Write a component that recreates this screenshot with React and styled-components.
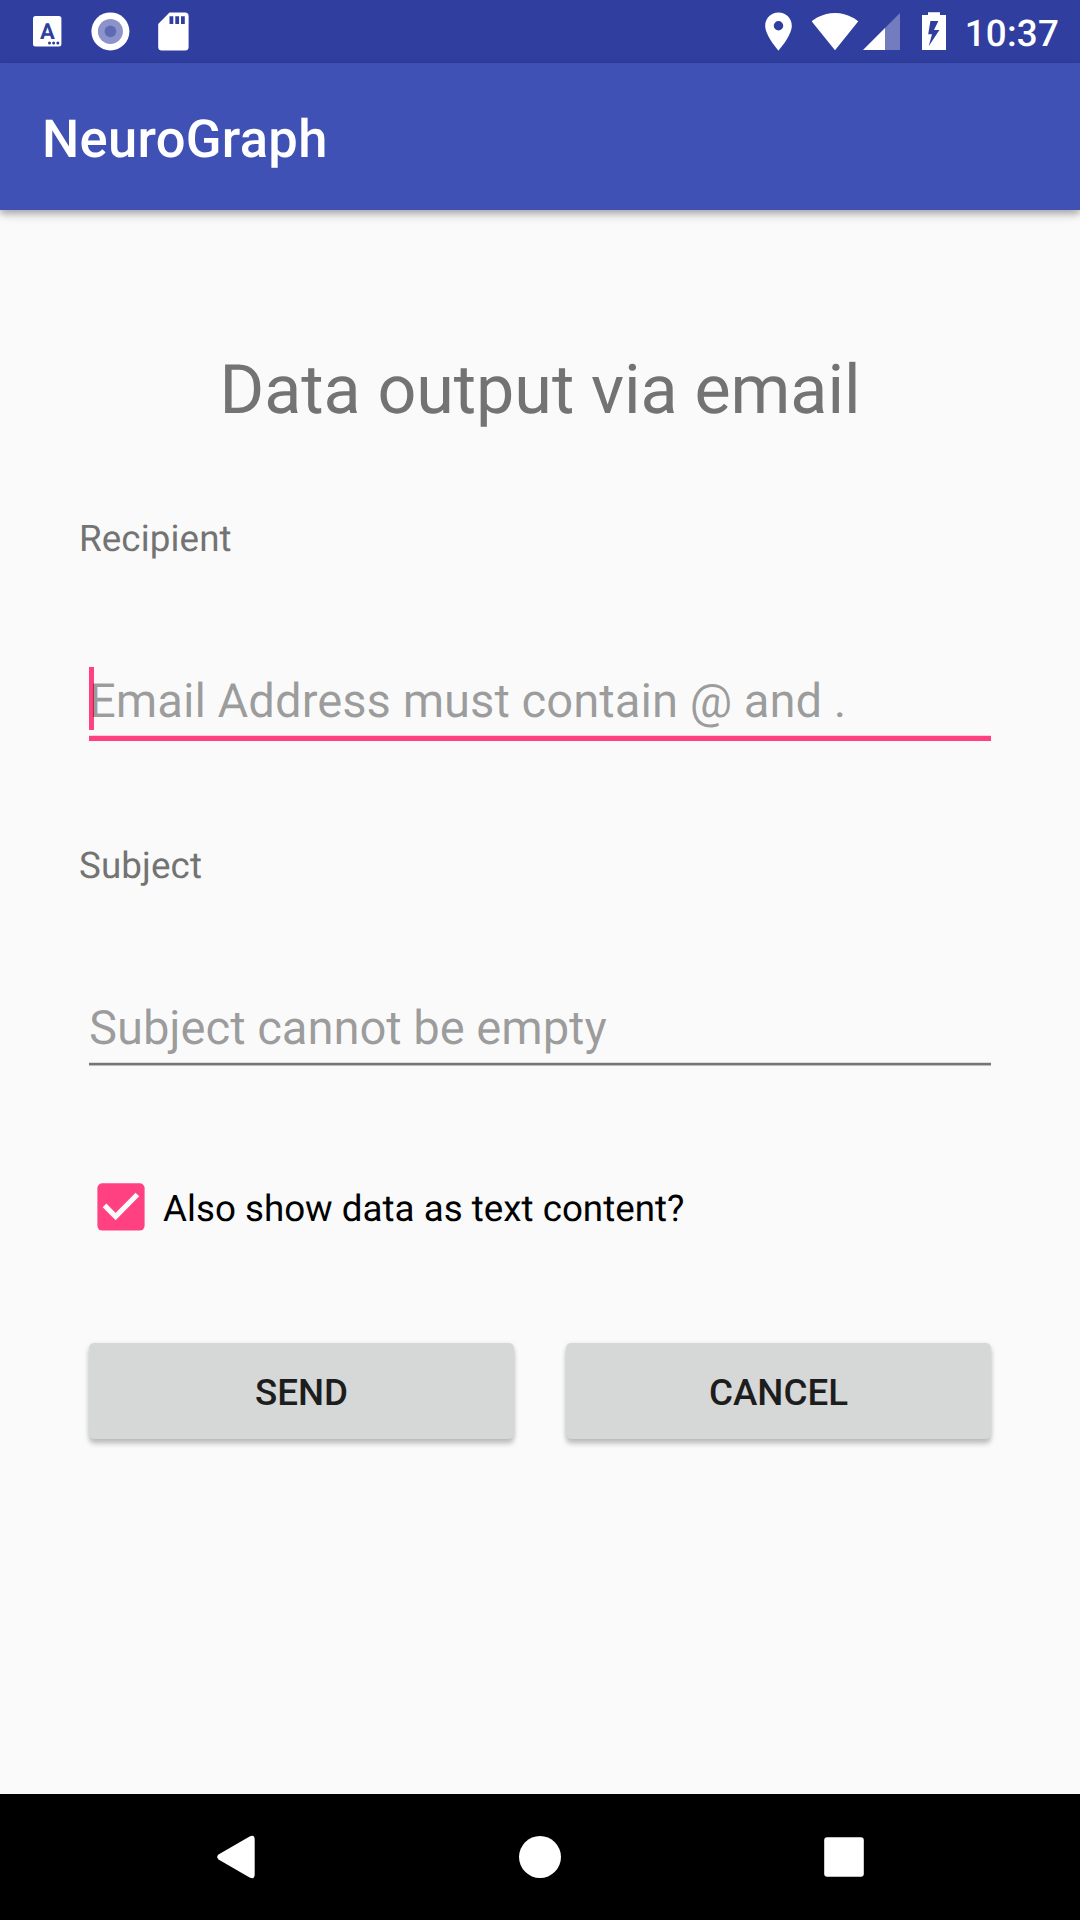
import React from 'react';
import styled, { createGlobalStyle } from 'styled-components';

const Global = createGlobalStyle`
  * { box-sizing: border-box; }
  body { margin: 0; background: #fafafa; }
  svg { display: block; flex: none; }
`;

const Screen = styled.div`
  display: flex;
  flex-direction: column;
  width: 1080px;
  height: 1920px;
  overflow: hidden;
  background: #fafafa;
  font-family: Roboto, "Liberation Sans", sans-serif;
  text-rendering: geometricPrecision;
`;

const StatusBar = styled.header`
  display: flex;
  align-items: center;
  justify-content: space-between;
  height: 63px;
  padding: 0 21px 0 32px;
  background: #303f9f;
`;

const IconStrip = styled.div`
  display: flex;
  align-items: center;
`;

const Clock = styled.span`
  margin-left: 19px;
  color: #fff;
  font-size: 36.75px;
  font-weight: 500;
  letter-spacing: 0.2px;
  line-height: 63px;
  padding-top: 3px;
`;

const AppBar = styled.div`
  display: flex;
  align-items: center;
  flex: none;
  height: 147px;
  padding: 0 42px;
  background: #3f51b5;
  box-shadow: 0 4px 10px rgba(0, 0, 0, 0.22), 0 4px 5px rgba(0, 0, 0, 0.14);
`;

const AppTitle = styled.h1`
  margin: 0;
  padding-top: 5px;
  color: #fff;
  font-size: 52.5px;
  font-weight: 500;
  letter-spacing: 0.3px;
  line-height: 62px;
`;

const Content = styled.main`
  flex: 1;
  padding: 140px 79px 0;
`;

const Heading = styled.h2`
  margin: 0 0 87px;
  color: #737373;
  font-size: 68.25px;
  font-weight: 400;
  letter-spacing: -0.07px;
  line-height: 80px;
  text-align: center;
`;

const Field = styled.label`
  display: block;
  height: 327px;
`;

const FieldLabel = styled.span`
  display: block;
  color: #737373;
  font-size: 36.75px;
  letter-spacing: 0.12px;
  line-height: 44px;
`;

const InputBox = styled.span`
  display: flex;
  align-items: flex-start;
  height: ${(p) => (p.$focused ? 74 : 65)}px;
  margin: ${(p) => (p.$focused ? 106 : 112)}px 10px 0;
  border-bottom: ${(p) => (p.$focused ? '5px solid #ff4081' : '2px solid #757575')};
  box-shadow: ${(p) => (p.$focused ? 'inset 0 -1px #fcd0de' : 'inset 0 -1px #dcdcdc, 0 1px #bcbcbc')};
`;

const Caret = styled.span`
  width: 5px;
  height: 63px;
  margin-right: -5px;
  background: #ff4081;
`;

const Hint = styled.span`
  color: rgba(0, 0, 0, 0.38);
  font-size: 47.25px;
  letter-spacing: ${(p) => (p.$focused ? -0.02 : -0.09)}px;
  line-height: 56px;
  padding-top: ${(p) => (p.$focused ? 6 : 0)}px;
  white-space: nowrap;
`;

const CheckRow = styled.label`
  display: flex;
  align-items: center;
  gap: 18px;
  height: 48px;
  padding-left: 18px;
  margin-top: 12px;
  color: #000;
  font-size: 36.75px;
  line-height: 44px;
`;

const CheckText = styled.span`
  padding-top: 3px;
`;

const Actions = styled.div`
  display: flex;
  gap: 52px;
  margin: 112px 10px 0;
`;

const Button = styled.button`
  flex: 1;
  height: 96px;
  padding: 3px 0 0;
  border: 0;
  border-radius: 5px;
  background: #d6d7d7;
  box-shadow: 0 5px 5px rgba(0, 0, 0, 0.2), 0 1px 5px rgba(0, 0, 0, 0.1);
  color: #1d1d1d;
  font-family: inherit;
  font-size: 36.75px;
  font-weight: 500;
  line-height: 44px;
`;

const NavBar = styled.nav`
  display: flex;
  align-items: center;
  justify-content: space-between;
  flex: none;
  height: 126px;
  padding: 0 215px;
  background: #000;
`;

const KeyboardIcon = () => (
  <svg width="30" height="63" viewBox="32 0 30 63">
    <rect x="33" y="16" width="28.4" height="30.6" rx="2.5" fill="#fff" />
    <text x="47.3" y="38.6" textAnchor="middle" fontFamily="Roboto" fontWeight="700" fontSize="22" fill="#303f9f">A</text>
    <g fill="#303f9f">
      <circle cx="49.5" cy="43" r="1.5" />
      <circle cx="53.6" cy="43" r="1.5" />
      <circle cx="57.8" cy="43" r="1.5" />
    </g>
  </svg>
);

const RecordIcon = () => (
  <svg width="96" height="63" viewBox="62 0 96 63">
    <circle cx="110.4" cy="31.4" r="19" fill="#fff" />
    <circle cx="110.4" cy="31.4" r="12.5" fill="#8b93ca" />
    <circle cx="110.4" cy="31.4" r="5.8" fill="#5f6ab4" />
  </svg>
);

const SdIcon = () => (
  <svg width="32" height="63" viewBox="158 0 32 63">
    <path d="M169.5 12.5H185a3.6 3.6 0 0 1 3.6 3.6V47a3.6 3.6 0 0 1-3.6 3.6H161.8a3.6 3.6 0 0 1-3.6-3.6V24Z" fill="#fff" />
    <path d="M169.5 16.3h3.8v7.7h-3.8zM175.3 16.3h3.8v7.7h-3.8zM181 16.3h3.8v7.7H181z" fill="#303f9f" />
  </svg>
);

const PinIcon = () => (
  <svg width="47" height="63" viewBox="765 0 47 63">
    <path fillRule="evenodd" d="M778.5 12.4c-7.4 0-13.3 5.9-13.3 13.3 0 10 13.3 24.8 13.3 24.8s13.3-14.8 13.3-24.8c0-7.4-5.9-13.3-13.3-13.3Zm0 18.1a4.75 4.75 0 1 1 0-9.5 4.75 4.75 0 0 1 0 9.5Z" fill="#fff" />
  </svg>
);

const WifiIcon = () => (
  <svg width="50" height="63" viewBox="812 0 50 63">
    <path d="M835 50.2 858.3 21.3C857.4 20.6 848.5 13 835 13s-22.4 7.6-23.3 8.3Z" fill="#fff" />
  </svg>
);

const SignalIcon = () => (
  <svg width="60" height="63" viewBox="862 0 60 63">
    <path d="M885 50H900V13L885 28Z" fill="#fff" fillOpacity="0.32" />
    <path d="M863 50H885V28Z" fill="#fff" />
  </svg>
);

const BatteryIcon = () => (
  <svg width="24" height="63" viewBox="922 0 24 63">
    <path fillRule="evenodd" d="M928 12.2h12v2.9h6V50h-24V15.1h6ZM930.4 21l-2.2 13.3h3.8L928.7 46.2 939.4 30H934l4.4-9Z" fill="#fff" />
  </svg>
);

const CheckIcon = () => (
  <svg width="48" height="48" viewBox="97 1183 48 48">
    <rect x="97.4" y="1183.2" width="47.2" height="47.4" rx="5" fill="#ff4081" />
    <path d="M104.5 1205.4 115.6 1216.5 137.4 1194.5" fill="none" stroke="#fafafa" strokeWidth="5.2" />
  </svg>
);

const BackIcon = () => (
  <svg width="42" height="46" viewBox="215 1834 42 46">
    <path d="M249.6 1836.6 218.5 1854.6Q215.8 1857 218.5 1859.4L249.6 1877.4Q254.7 1880 254.7 1874V1840Q254.7 1834 249.6 1836.6Z" fill="#fff" />
  </svg>
);

const HomeIcon = () => (
  <svg width="46" height="46" viewBox="0 0 46 46">
    <circle cx="23" cy="23" r="21" fill="#fff" />
  </svg>
);

const RecentsIcon = () => (
  <svg width="42" height="46" viewBox="823 1834 42 46">
    <rect x="824.2" y="1837.2" width="39.6" height="39.6" rx="3" fill="#fff" />
  </svg>
);

export default function App() {
  return (
    <Screen>
      <Global />
      <StatusBar>
        <IconStrip>
          <KeyboardIcon />
          <RecordIcon />
          <SdIcon />
        </IconStrip>
        <IconStrip>
          <PinIcon />
          <WifiIcon />
          <SignalIcon />
          <BatteryIcon />
          <Clock>10:37</Clock>
        </IconStrip>
      </StatusBar>
      <AppBar>
        <AppTitle>NeuroGraph</AppTitle>
      </AppBar>
      <Content>
        <Heading>Data output via email</Heading>
        <Field>
          <FieldLabel>Recipient</FieldLabel>
          <InputBox $focused>
            <Caret />
            <Hint $focused>Email Address must contain @ and .</Hint>
          </InputBox>
        </Field>
        <Field>
          <FieldLabel>Subject</FieldLabel>
          <InputBox>
            <Hint>Subject cannot be empty</Hint>
          </InputBox>
        </Field>
        <CheckRow>
          <CheckIcon />
          <CheckText>Also show data as text content?</CheckText>
        </CheckRow>
        <Actions>
          <Button>SEND</Button>
          <Button>CANCEL</Button>
        </Actions>
      </Content>
      <NavBar>
        <BackIcon />
        <HomeIcon />
        <RecentsIcon />
      </NavBar>
    </Screen>
  );
}
